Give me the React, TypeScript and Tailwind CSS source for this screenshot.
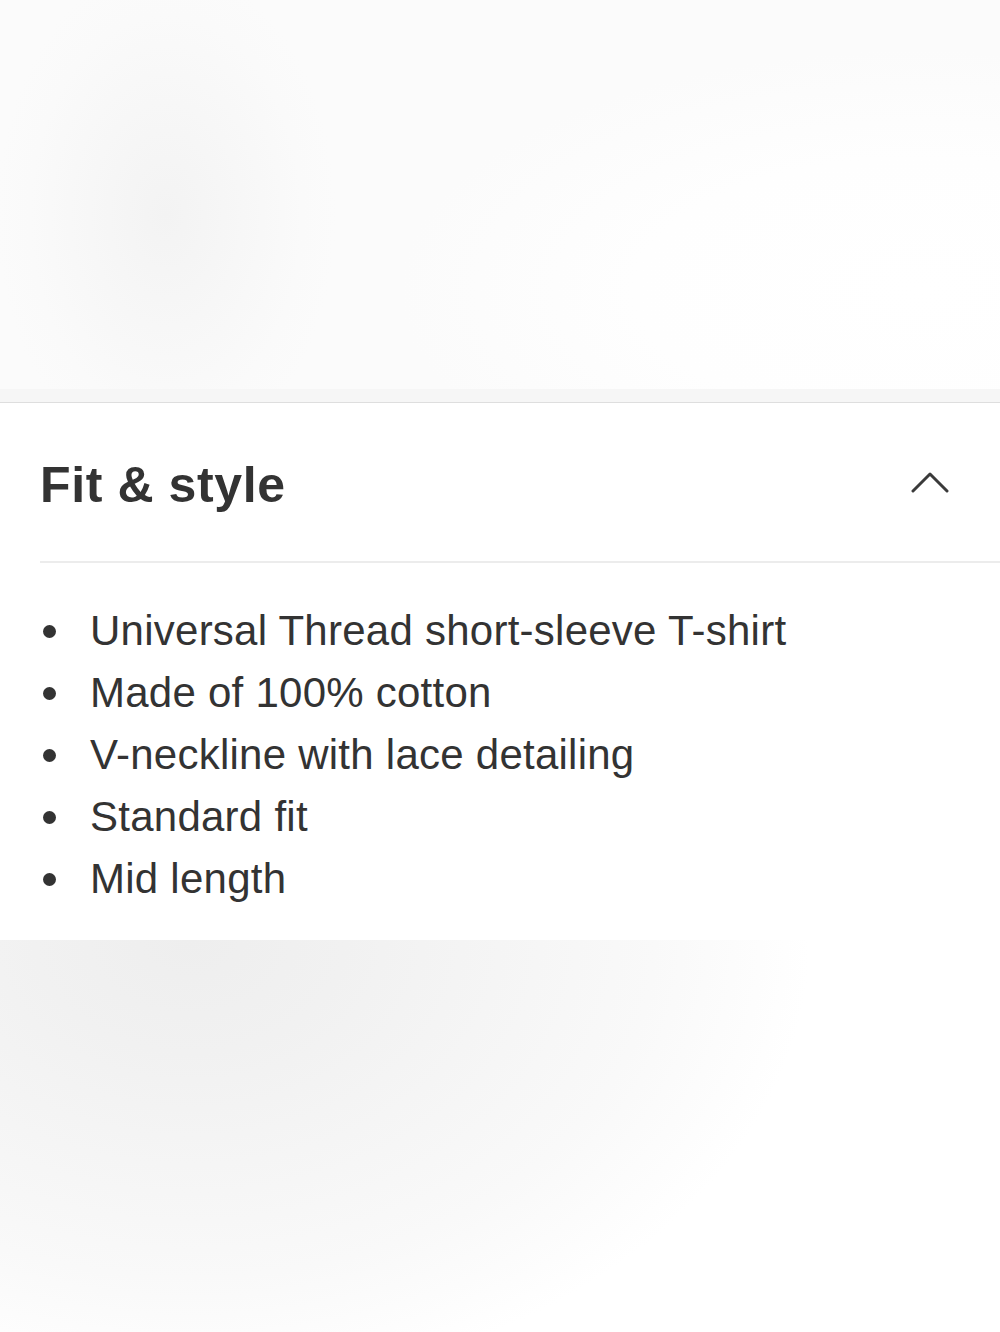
const points = [
    "Universal Thread short-sleeve T-shirt",
    "Made of 100% cotton",
    "V-neckline with lace detailing",
    "Standard fit",
    "Mid length",
]

const App = () => {
    return (
        <main
            className="min-h-screen w-[1000px] bg-white flex flex-col"
            style={{ fontFamily: '"Liberation Sans", Arial, sans-serif' }}
        >
            {/* blurred photo area above the panel */}
            <div className="h-[389px] bg-[radial-gradient(ellipse_170px_250px_at_166px_215px,#f3f3f3_0%,#f7f7f7_45%,#fafafa_80%,rgba(250,250,250,0)_100%),radial-gradient(ellipse_520px_240px_at_920px_290px,#ffffff_0%,#fefefe_55%,#fbfbfb_100%)] bg-[#fafafa]" />
            <div className="h-[14px] bg-[#f6f6f6] border-b border-[#dedede]" />

            <section className="bg-white text-[#333333]">
                <div className="h-[158px] flex items-center justify-between pt-[5px] pl-10 pr-[51px]">
                    <h2 className="text-[50px] font-bold leading-none tracking-[0.6px]">
                        Fit &amp; style
                    </h2>
                    <svg
                        width="38"
                        height="22"
                        viewBox="0 0 38 22"
                        fill="none"
                        stroke="#3a3a3a"
                        strokeWidth="3"
                        strokeLinecap="round"
                        strokeLinejoin="round"
                        className="-mt-[4px]"
                    >
                        <polyline points="2,19 19,2 36,19" />
                    </svg>
                </div>
                <div className="ml-10 border-t-2 border-[#ececec]" />
                <ul className="pt-[37px] pb-[30px] pl-[43px]">
                    {points.map((p) => (
                        <li key={p} className="flex items-center h-[62px]">
                            <span className="w-[13px] h-[13px] rounded-full bg-[#333333] shrink-0" />
                            <span className="ml-[34px] text-[42px] leading-[62px] tracking-[0.25px]">
                                {p}
                            </span>
                        </li>
                    ))}
                </ul>
            </section>

            {/* blurred photo area below the panel */}
            <div className="flex-1 h-[391px] bg-[radial-gradient(ellipse_620px_450px_at_190px_0px,#eeeeee_0%,#f1f1f1_25%,#f5f5f5_50%,#f9f9f9_75%,#fdfdfd_92%,#ffffff_100%)]" />
        </main>
    )
}

export default App
